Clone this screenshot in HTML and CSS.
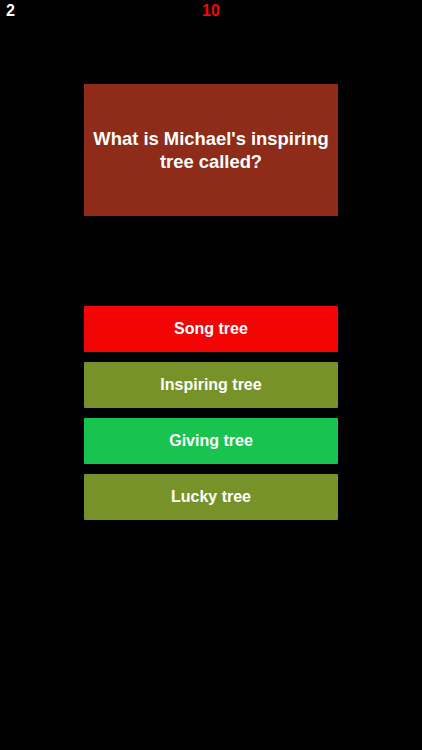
FILE: index.html
```html
<!DOCTYPE html>
<html lang="en">
<head>
    <meta charset="UTF-8">
    <meta name="viewport" content="width=device-width, initial-scale=1.0">
    <title>Quiz</title>
    <link rel="stylesheet" href="styles.css">
</head>
<body>

    <!-- Score and timer -->
    <div class="top-bar">
        <span class="score">2</span>
        <span class="timer">10</span>
    </div>

    <!-- Question -->
    <div class="question">What is Michael's inspiring tree called?</div>

    <!-- Answers -->
    <div class="answers">
        <button class="answer wrong">Song tree</button>
        <button class="answer">Inspiring tree</button>
        <button class="answer right">Giving tree</button>
        <button class="answer">Lucky tree</button>
    </div>

</body>
</html>
```

FILE: styles.css
```css
body {
    margin: 0;
    background-color: black;
    font-family: "Liberation Sans", Arial, sans-serif;
    font-weight: bold;
    color: white;
    height: 750px;
}
.top-bar {
    position: relative;
    height: 22px;
    font-size: 16px;
    line-height: 22px;
}
.score {
    position: absolute;
    left: 6px;
    top: 0;
}
.timer {
    display: block;
    text-align: center;
    color: #f00a0a;
}
.question {
    width: 254px;
    height: 132px;
    margin: 62px auto 0;
    padding: 0 4px;
    box-sizing: border-box;
    background-color: #8f2c19;
    font-size: 18.4px;
    line-height: 23px;
    text-align: center;
    display: flex;
    align-items: center;
    justify-content: center;
}
.answers {
    width: 254px;
    margin: 90px auto 0;
    display: flex;
    flex-direction: column;
    gap: 10px;
}
.answer {
    height: 46px;
    border: none;
    border-radius: 1px;
    background-color: #78922a;
    color: white;
    font-family: inherit;
    font-weight: bold;
    font-size: 16px;
    padding: 0;
}
.answer.wrong {
    background-color: #f20505;
}
.answer.right {
    background-color: #18c44f;
}
```
